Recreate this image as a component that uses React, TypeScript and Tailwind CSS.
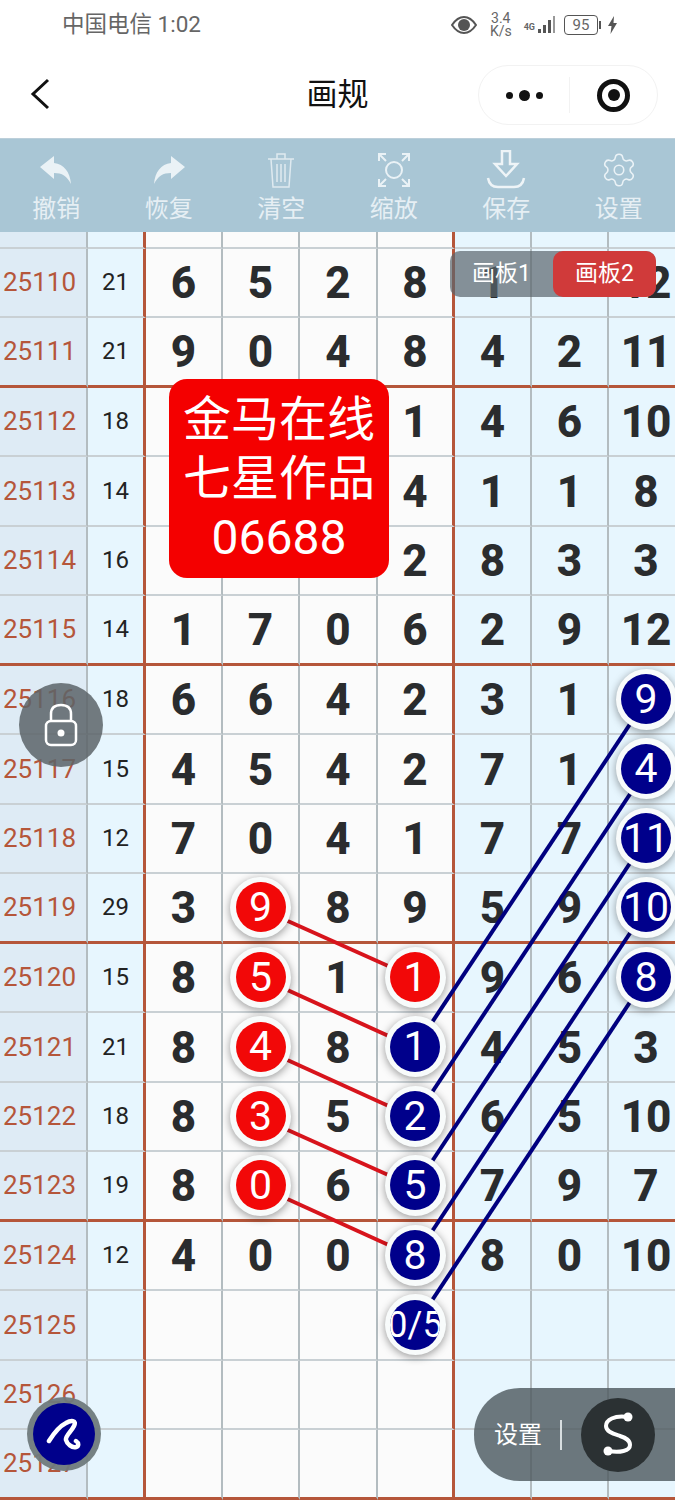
import { Settings } from "lucide-react"

type Ball = { n: string; c: "red" | "blue" }
type Cell = string | Ball

const r = (n: string): Ball => ({ n, c: "red" })
const b = (n: string): Ball => ({ n, c: "blue" })

const rows: { id: string; sum: string; cells: Cell[] }[] = [
  { id: "25110", sum: "21", cells: ["6", "5", "2", "8", "1", "", "12"] },
  { id: "25111", sum: "21", cells: ["9", "0", "4", "8", "4", "2", "11"] },
  { id: "25112", sum: "18", cells: ["", "", "", "1", "4", "6", "10"] },
  { id: "25113", sum: "14", cells: ["", "", "", "4", "1", "1", "8"] },
  { id: "25114", sum: "16", cells: ["", "", "", "2", "8", "3", "3"] },
  { id: "25115", sum: "14", cells: ["1", "7", "0", "6", "2", "9", "12"] },
  { id: "25116", sum: "18", cells: ["6", "6", "4", "2", "3", "1", b("9")] },
  { id: "25117", sum: "15", cells: ["4", "5", "4", "2", "7", "1", b("4")] },
  { id: "25118", sum: "12", cells: ["7", "0", "4", "1", "7", "7", b("11")] },
  { id: "25119", sum: "29", cells: ["3", r("9"), "8", "9", "5", "9", b("10")] },
  { id: "25120", sum: "15", cells: ["8", r("5"), "1", r("1"), "9", "6", b("8")] },
  { id: "25121", sum: "21", cells: ["8", r("4"), "8", b("1"), "4", "5", "3"] },
  { id: "25122", sum: "18", cells: ["8", r("3"), "5", b("2"), "6", "5", "10"] },
  { id: "25123", sum: "19", cells: ["8", r("0"), "6", b("5"), "7", "9", "7"] },
  { id: "25124", sum: "12", cells: ["4", "0", "0", b("8"), "8", "0", "10"] },
  { id: "25125", sum: "", cells: ["", "", "", b("0/5"), "", "", ""] },
  { id: "25126", sum: "", cells: ["", "", "", "", "", "", ""] },
  { id: "25127", sum: "", cells: ["", "", "", "", "", "", ""] },
]

const gridCols = "grid grid-cols-[88px_58px_77px_77px_78px_77px_77px_77px_74px] w-[683px]"
const vLine = "border-r-2 border-r-[#b3bcc0]"

const redLines = [
  [261, 909, 415, 978],
  [261, 978, 415, 1048],
  [261, 1048, 415, 1118],
  [261, 1118, 415, 1187],
  [261, 1187, 415, 1257],
]
const blueLines = [
  [415, 1048, 646, 700],
  [415, 1118, 646, 770],
  [415, 1187, 646, 839],
  [415, 1257, 646, 909],
  [415, 1326, 646, 978],
]

function cellClass(i: number) {
  const bg = i < 4 ? "bg-[#fbfbfb]" : "bg-[#e7f6fe]"
  const edge = i === 3 ? "border-r-[3px] border-r-[#b5563a]" : i === 6 ? "" : vLine
  return `${bg} ${edge}`
}

function BallView({ ball }: { ball: Ball }) {
  return (
    <div className="relative z-20 flex h-[61px] w-[61px] items-center justify-center rounded-full bg-[#f8fbfb] shadow-[0_2px_8px_rgba(0,0,0,0.4)]">
      <div
        className={`flex h-[50px] w-[50px] items-center justify-center overflow-hidden rounded-full leading-none font-normal whitespace-nowrap text-white ${
          ball.n.length > 2 ? "text-[36px]" : "text-[41px]"
        } ${ball.c === "red" ? "bg-[#f20808]" : "bg-[#00008b]"}`}
      >
        {ball.n}
      </div>
    </div>
  )
}

function Tool({ label, children }: { label: string; children: React.ReactNode }) {
  return (
    <div className="flex flex-col items-center">
      <div className="flex h-[44px] items-center justify-center">{children}</div>
      <div className="mt-px text-[24px] leading-[32px] text-[#e6eff4]">{label}</div>
    </div>
  )
}

export default function App() {
  return (
    <div className="relative h-[1500px] w-[675px] overflow-hidden bg-white font-['Roboto','Noto_Sans_CJK_SC',sans-serif]">
      {/* Status bar */}
      <div className="flex h-[50px] items-center justify-between pr-[58px] pl-[62px] text-[#666]">
        <div className="text-[22.5px]">中国电信 1:02</div>
        <div className="flex items-center">
          <svg width="26" height="18" viewBox="0 0 26 18">
            <path d="M1 9C5 3 9 1 13 1s8 2 12 8c-4 6-8 8-12 8S5 15 1 9z" fill="none" stroke="#555" strokeWidth="2" />
            <circle cx="13" cy="9" r="6" fill="#555" />
          </svg>
          <div className="ml-[13px] text-center text-[14px] leading-[13px]">
            <div>3.4</div>
            <div>K/s</div>
          </div>
          <div className="ml-[12px] flex items-end">
            <div className="mr-[3px] text-[9px] leading-[16px] font-bold">4G</div>
            <svg width="18" height="20" viewBox="0 0 18 20" fill="#555">
              <rect x="0" y="14" width="3" height="4" />
              <rect x="5" y="10" width="3" height="8" />
              <rect x="10" y="5" width="3" height="13" />
              <rect x="15" y="1" width="2" height="17" fill="#999" />
            </svg>
          </div>
          <div className="ml-[8px] flex h-[20px] w-[34px] items-center justify-center rounded-[4px] border border-[#555] text-[15px] leading-none">
            95
          </div>
          <div className="ml-[1px] h-[8px] w-[2px] bg-[#555]" />
          <svg className="ml-[7px]" width="9" height="18" viewBox="0 0 9 18" fill="#555">
            <path d="M6 0L0 10h3.5L2.5 18 9 7H5.5z" />
          </svg>
        </div>
      </div>

      {/* Nav */}
      <div className="relative flex h-[88px] items-center justify-center pt-[3px]">
        <svg className="absolute top-[28px] left-[30px]" width="20" height="32" viewBox="0 0 20 32" fill="none">
          <path d="M18 2L3 16l15 14" stroke="#111" strokeWidth="3" />
        </svg>
        <div className="text-[31px] text-[#111]">画规</div>
        <div className="absolute top-[15px] left-[478px] flex h-[60px] w-[180px] items-center rounded-[30px] border border-[#f2f2f2]">
          <div className="flex w-[90px] items-center justify-center gap-[6px]">
            <div className="h-[7px] w-[7px] rounded-full bg-[#111]" />
            <div className="h-[11px] w-[11px] rounded-full bg-[#111]" />
            <div className="h-[7px] w-[7px] rounded-full bg-[#111]" />
          </div>
          <div className="h-[36px] w-px bg-[#f2f2f2]" />
          <div className="flex flex-1 items-center justify-center">
            <div className="flex h-[33px] w-[33px] items-center justify-center rounded-full border-[5px] border-[#111]">
              <div className="h-[12px] w-[12px] rounded-full bg-[#111]" />
            </div>
          </div>
        </div>
      </div>

      {/* Toolbar */}
      <div className="grid h-[94px] grid-cols-6 border-t border-t-[#bccfda] bg-[#a9c6d5] pt-[9px]">
        <Tool label="撤销">
          <svg width="32" height="30" viewBox="0 0 32 30" fill="#eaf2f6">
            <path d="M0 12L14 1v7c10 1 16 9 17 21-4-8-9-11-17-11v6z" />
          </svg>
        </Tool>
        <Tool label="恢复">
          <svg width="32" height="30" viewBox="0 0 32 30" fill="#eaf2f6">
            <path d="M32 12L18 1v7C8 9 2 17 1 29c4-8 9-11 17-11v6z" />
          </svg>
        </Tool>
        <Tool label="清空">
          <svg width="28" height="38" viewBox="0 0 28 38" fill="none" stroke="#dfeaf0" strokeWidth="1.5">
            <path d="M1 8h26M10 8V3h8v5M4 8l2 28h16l2-28M10 13v18M14 13v18M18 13v18" />
          </svg>
        </Tool>
        <Tool label="缩放">
          <svg width="34" height="36" viewBox="0 0 34 36" fill="none" stroke="#eaf2f6" strokeWidth="2">
            <circle cx="17" cy="18" r="8" />
            <path d="M2 9V2h7M2 2l7 7M32 9V2h-7M32 2l-7 7M2 27v7h7M2 34l7-7M32 27v7h-7M32 34l-7-7" />
          </svg>
        </Tool>
        <Tool label="保存">
          <svg width="40" height="40" viewBox="0 0 40 40" fill="none" stroke="#eef4f7" strokeWidth="2.5">
            <path d="M16 1h8v13h7L20 26 9 14h7zM2 28c1 6 5 9 10 9h16c5 0 9-3 10-9" />
          </svg>
        </Tool>
        <Tool label="设置">
          <Settings size={38} strokeWidth={1} color="#eaf2f6" />
        </Tool>
      </div>

      {/* Table */}
      <div className="relative">
        {/* top partial row */}
        <div className={`${gridCols} h-[16.5px]`}>
          <div className={`border-b-2 border-b-[#c9d0d4] bg-[#deebf5] ${vLine}`} />
          <div className="border-r-[3px] border-b-2 border-r-[#b5563a] border-b-[#c9d0d4] bg-[#e7f6fe]" />
          {[0, 1, 2, 3, 4, 5, 6].map((i) => (
            <div key={i} className={`border-b-2 border-b-[#c9d0d4] ${cellClass(i)}`} />
          ))}
        </div>

        {rows.map((row, ri) => {
          const hLine = ri % 4 === 1 ? "border-b-[3px] border-b-[#b5563a]" : "border-b-2 border-b-[#c9d0d4]"
          return (
            <div key={row.id} className={`${gridCols} h-[69.5px]`}>
              <div className={`flex items-center pt-px pl-[3px] text-[26px] text-[#b5563a] bg-[#deebf5] ${vLine} ${hLine}`}>
                {row.id}
              </div>
              <div className={`flex items-center justify-center border-r-[3px] border-r-[#b5563a] bg-[#e7f6fe] text-[24px] text-[#222] ${hLine}`}>
                {row.sum}
              </div>
              {row.cells.map((cell, i) => (
                <div
                  key={i}
                  className={`flex items-center justify-center text-[44px] leading-none font-extrabold text-[#2a2c2e] ${
                    typeof cell === "string" ? "pt-[2px]" : ""
                  } ${cellClass(i)} ${hLine}`}
                >
                  {typeof cell === "string" ? cell : <BallView ball={cell} />}
                </div>
              ))}
            </div>
          )
        })}

        {/* connecting lines */}
        <svg className="absolute top-0 left-0 z-10" width="675" height="1268" viewBox="0 232 675 1268">
          {redLines.map((l, i) => (
            <line key={i} x1={l[0]} y1={l[1]} x2={l[2]} y2={l[3]} stroke="#d7141c" strokeWidth="4" />
          ))}
          {blueLines.map((l, i) => (
            <line key={i} x1={l[0]} y1={l[1]} x2={l[2]} y2={l[3]} stroke="#00007f" strokeWidth="4" />
          ))}
        </svg>
      </div>

      {/* Board tabs */}
      <div className="absolute top-[251px] left-[450px] z-30 flex h-[46px] w-[206px] rounded-[10px] bg-[#5a656c]/70 text-[23px] text-white">
        <div className="flex w-[103px] items-center justify-center">画板1</div>
        <div className="flex w-[103px] items-center justify-center rounded-[10px] bg-[#d03a3a]">画板2</div>
      </div>

      {/* Promo */}
      <div className="absolute top-[379px] left-[169px] z-30 flex h-[199px] w-[220px] flex-col items-center justify-center rounded-[18px] bg-[#f40000] text-[48px] leading-[59px] text-white">
        <div>金马在线</div>
        <div>七星作品</div>
        <div>06688</div>
      </div>

      {/* Lock */}
      <div className="absolute top-[683px] left-[19px] z-30 flex h-[84px] w-[84px] items-center justify-center rounded-full bg-[#5c6468]/85">
        <svg width="34" height="44" viewBox="0 0 34 44" fill="none" stroke="white" strokeWidth="2.5">
          <path d="M7 18V11C7 5 11 2 17 2s10 3 10 9v7" />
          <rect x="2" y="18" width="30" height="24" rx="5" />
          <circle cx="17" cy="30" r="3.5" fill="white" stroke="none" />
        </svg>
      </div>

      {/* Pen button */}
      <div className="absolute top-[1397px] left-[27px] z-30 flex h-[74px] w-[74px] items-center justify-center rounded-full bg-[#6f7a7c]/95">
        <div className="flex h-[62px] w-[62px] items-center justify-center rounded-full bg-[#00008b]">
          <svg width="36" height="32" viewBox="0 0 36 32" fill="none" stroke="white" strokeWidth="4.5" strokeLinecap="round" strokeLinejoin="round">
            <path d="M3 23C8 15 14 8 20 5c5-3 11-3 8 3-3 6-9 10-8 14 1 4 6 8 10 7 3-1 3-4 0-6" />
          </svg>
        </div>
      </div>

      {/* Draw settings pill */}
      <div className="absolute top-[1388px] left-[474px] z-30 flex h-[93px] w-[210px] items-center rounded-l-[46px] bg-[#4c575c]/80 pl-[20px]">
        <div className="text-[24px] text-white">设置</div>
        <div className="ml-[18px] h-[30px] w-[2px] bg-[#d8dee0]" />
        <div className="ml-[19px] flex h-[74px] w-[74px] items-center justify-center rounded-full bg-[#2b3133]">
          <svg width="32" height="46" viewBox="0 0 32 46" fill="none" stroke="white" strokeWidth="4">
            <path d="M26 5C12 3 4 8 4 14c0 6 8 8 14 10 6 2 10 4 10 9 0 6-10 8-22 6" />
            <circle cx="26" cy="5" r="4.5" fill="white" stroke="none" />
            <circle cx="6" cy="39" r="4.5" fill="white" stroke="none" />
          </svg>
        </div>
      </div>
    </div>
  )
}
